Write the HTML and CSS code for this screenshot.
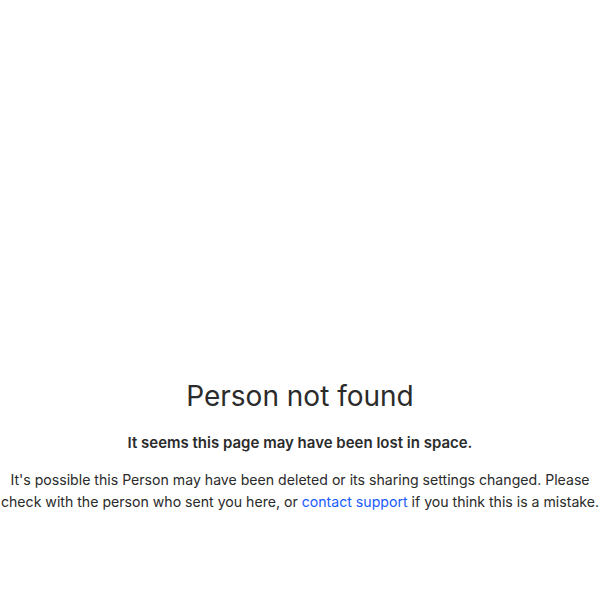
FILE: index.html
```html
<!DOCTYPE html>
<html>
<head>
<meta charset="utf-8">
<link rel="stylesheet" href="styles.css">
</head>
<body>
<main class="notfound">
  <h1 class="title">Person not found</h1>
  <p class="subtitle">It seems this page may have been lost in space.</p>
  <p class="body">It's possible this Person may have been deleted or its sharing settings changed. Please check with the person who sent you here, or <a class="link" href="#">contact support</a> if you think this is a mistake.</p>
</main>
</body>
</html>
```
FILE: styles.css
```css
html, body {
  margin: 0;
  padding: 0;
  background: #fff;
}
body {
  font-family: Inter, "Noto Sans", sans-serif;
  color: #2b2b2b;
}
.notfound {
  padding-top: 379px;
  text-align: center;
}
.title {
  margin: 0;
  font-size: 28px;
  line-height: 34px;
  font-weight: 400;
}
.subtitle {
  margin: 19px 0 0;
  font-size: 15px;
  line-height: 22px;
  font-weight: 600;
}
.body {
  margin: 15px 0 0;
  font-size: 14.12px;
  line-height: 22px;
}
.link {
  color: #1a5cff;
  text-decoration: none;
}
```
